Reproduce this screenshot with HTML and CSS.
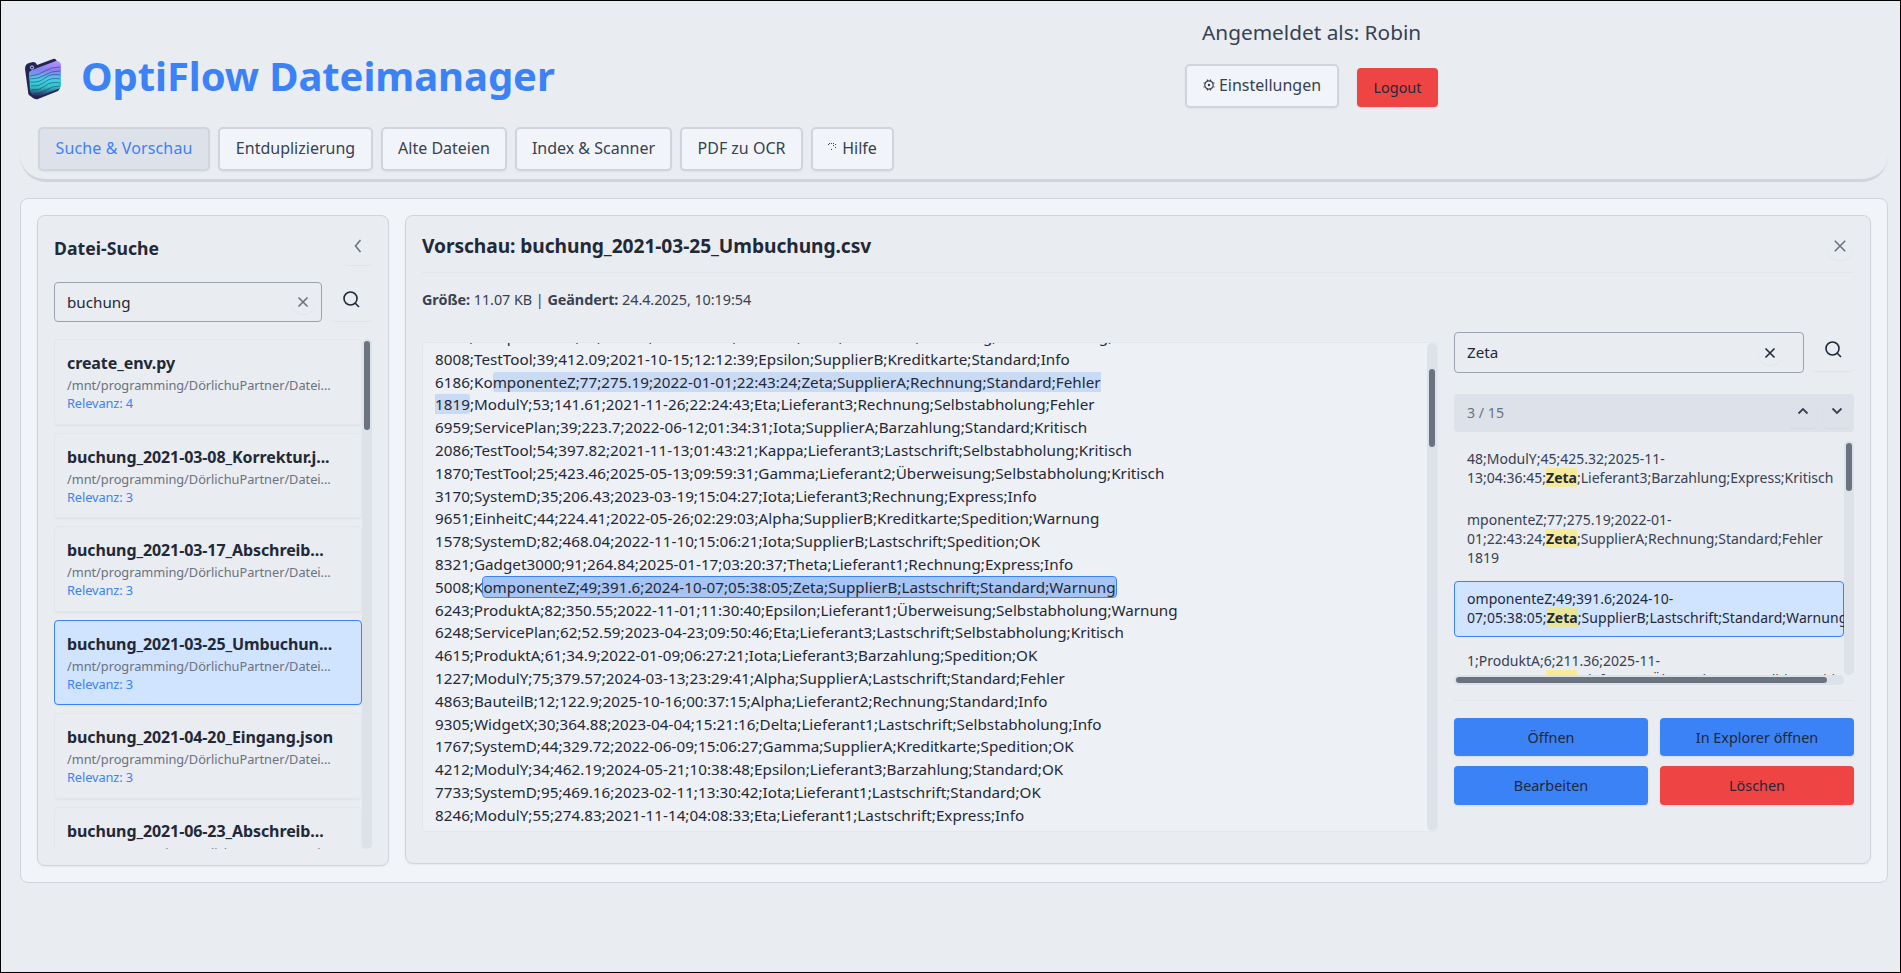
FILE: index.html
```html
<!DOCTYPE html>
<html lang="de">
<head>
<meta charset="utf-8">
<title>OptiFlow Dateimanager</title>
<link rel="stylesheet" href="styles.css">
</head>
<body>
<div class="app">
  <header class="header">
    <div class="header-top">
      <div class="brand">
        <svg class="logo" viewBox="0 0 36 42">
          <defs><linearGradient id="lg" x1="0" y1="0" x2="0" y2="1"><stop offset="0" stop-color="#b794ff"/><stop offset=".25" stop-color="#8b7cf0"/><stop offset=".5" stop-color="#45cfe6"/><stop offset=".72" stop-color="#2fc4c6"/><stop offset="1" stop-color="#2a1458"/></linearGradient></defs>
          <path d="M0 11Q0 6 4 5L8 4Q11 4 12 7L28 1Q31 0 32 4L35 9V29Q35 31 33 33L13 41Q11 42 8 40L4 37Q3 36 3 33Z" fill="#23264f"/>
          <path d="M4 15Q4 13 7 12L31 3Q36 3 36 8V27Q36 30 33 31L13 39Q6 38 5 32Z" fill="url(#lg)"/>
          <g fill="none" stroke="#24306e" stroke-width=".7" stroke-opacity=".75"><path d="M5 18Q14 17 20 13T35 9"/><path d="M5 21Q14 21 20 17T35 13"/><path d="M5 24Q14 25 20 20T35 17"/><path d="M6 28Q14 29 20 24T35 21"/><path d="M6 32Q14 33 20 28T35 25"/><path d="M8 36Q15 36 21 32T35 28"/></g>
          <circle cx="7" cy="9.5" r="1.6" fill="none" stroke="#c7d2fe" stroke-width="1"/>
        </svg>
        <h1>OptiFlow Dateimanager</h1>
      </div>
      <div class="user">
        <div class="user-name">Angemeldet als: Robin</div>
        <div class="user-actions">
          <button class="tab settings"><svg class="gear" viewBox="0 0 12 14"><circle cx="6" cy="7" r="4.2"/><circle cx="6" cy="7" r=".6"/><path d="M4.5 3V1.5M7.5 3V1.5M4.5 11V12.5M7.5 11V12.5M1.7 5H.5M10.3 5H11.5M1.7 9H.5M10.3 9H11.5"/></svg><span>Einstellungen</span></button>
          <button class="btn danger logout">Logout</button>
        </div>
      </div>
    </div>
    <nav class="tabs">
      <button class="tab active t1">Suche &amp; Vorschau</button>
      <button class="tab t2">Entduplizierung</button>
      <button class="tab t3">Alte Dateien</button>
      <button class="tab t4">Index &amp; Scanner</button>
      <button class="tab t5">PDF zu OCR</button>
      <button class="tab t6"><svg class="help" viewBox="0 0 9 8"><path d="M1 0h1v1H1zM3 0h1v1H3zM5 0h1v1H5zM0 1h1v1H0zM5 2h1v1H5zM7 1h1v1H7zM7 4h1v1H7zM3 6h1v1H3z"/></svg><span>Hilfe</span></button>
    </nav>
  </header>

  <main class="main">
    <aside class="sidebar">
      <div class="side-head">
        <h2>Datei-Suche</h2>
        <button class="ghost collapse"><svg class="ic muted" viewBox="0 0 8 14"><path d="M6.5 1L1.5 7l5 6"/></svg></button>
      </div>
      <div class="search-row">
        <div class="input"><span>buchung</span><button class="ghost round clear"><svg class="ic-x muted" viewBox="0 0 12 12"><path d="M1.5 1.5l9 9M10.5 1.5l-9 9"/></svg></button></div>
        <button class="ghost search-btn"><svg class="ic-s" viewBox="0 0 17 17"><circle cx="7.5" cy="7.5" r="6.5"/><path d="M12.3 12.3l3.7 3.7"/></svg></button>
      </div>
      <div class="file-scroll">
        <div class="file-list">
          <div class="file"><b>create_env.py</b><i>/mnt/programming/DörlichuPartner/Datei...</i><em>Relevanz: 4</em></div>
          <div class="file"><b>buchung_2021-03-08_Korrektur.j...</b><i>/mnt/programming/DörlichuPartner/Datei...</i><em>Relevanz: 3</em></div>
          <div class="file"><b>buchung_2021-03-17_Abschreib...</b><i>/mnt/programming/DörlichuPartner/Datei...</i><em>Relevanz: 3</em></div>
          <div class="file selected"><b>buchung_2021-03-25_Umbuchun...</b><i>/mnt/programming/DörlichuPartner/Datei...</i><em>Relevanz: 3</em></div>
          <div class="file"><b>buchung_2021-04-20_Eingang.json</b><i>/mnt/programming/DörlichuPartner/Datei...</i><em>Relevanz: 3</em></div>
          <div class="file"><b>buchung_2021-06-23_Abschreib...</b><i>/mnt/programming/DörlichuPartner/Datei...</i><em>Relevanz: 3</em></div>
        </div>
        <div class="track"><div class="thumb side-thumb"></div></div>
      </div>
    </aside>

    <section class="preview">
      <div class="preview-head">
        <h2>Vorschau: buchung_2021-03-25_Umbuchung.csv</h2>
        <button class="ghost round close"><svg class="ic-x muted" viewBox="0 0 12 12"><path d="M.8 .8l10.4 10.4M11.2 .8L.8 11.2"/></svg></button>
      </div>
      <div class="meta"><b>Größe:</b> 11.07 KB | <b>Geändert:</b> 24.4.2025, 10:19:54</div>
      <div class="preview-body">
        <div class="text-box">
          <pre class="csv">7421;KomponenteZ;18;301.77;2024-02-21;08:15:40;Delta;Lieferant2;Rechnung;Selbstabholung;OK
8008;TestTool;39;412.09;2021-10-15;12:12:39;Epsilon;SupplierB;Kreditkarte;Standard;Info
6186;Ko<mark>mponenteZ;77;275.19;2022-01-01;22:43:24;Zeta;SupplierA;Rechnung;Standard;Fehler
1819</mark>;ModulY;53;141.61;2021-11-26;22:24:43;Eta;Lieferant3;Rechnung;Selbstabholung;Fehler
6959;ServicePlan;39;223.7;2022-06-12;01:34:31;Iota;SupplierA;Barzahlung;Standard;Kritisch
2086;TestTool;54;397.82;2021-11-13;01:43:21;Kappa;Lieferant3;Lastschrift;Selbstabholung;Kritisch
1870;TestTool;25;423.46;2025-05-13;09:59:31;Gamma;Lieferant2;Überweisung;Selbstabholung;Kritisch
3170;SystemD;35;206.43;2023-03-19;15:04:27;Iota;Lieferant3;Rechnung;Express;Info
9651;EinheitC;44;224.41;2022-05-26;02:29:03;Alpha;SupplierB;Kreditkarte;Spedition;Warnung
1578;SystemD;82;468.04;2022-11-10;15:06:21;Iota;SupplierB;Lastschrift;Spedition;OK
8321;Gadget3000;91;264.84;2025-01-17;03:20:37;Theta;Lieferant1;Rechnung;Express;Info
5008;K<mark class="current">omponenteZ;49;391.6;2024-10-07;05:38:05;Zeta;SupplierB;Lastschrift;Standard;Warnung</mark>
<span class="tight">6243;ProduktA;82;350.55;2022-11-01;11:30:40;Epsilon;Lieferant1;Überweisung;Selbstabholung;Warnung</span>
6248;ServicePlan;62;52.59;2023-04-23;09:50:46;Eta;Lieferant3;Lastschrift;Selbstabholung;Kritisch
4615;ProduktA;61;34.9;2022-01-09;06:27:21;Iota;Lieferant3;Barzahlung;Spedition;OK
1227;ModulY;75;379.57;2024-03-13;23:29:41;Alpha;SupplierA;Lastschrift;Standard;Fehler
4863;BauteilB;12;122.9;2025-10-16;00:37:15;Alpha;Lieferant2;Rechnung;Standard;Info
9305;WidgetX;30;364.88;2023-04-04;15:21:16;Delta;Lieferant1;Lastschrift;Selbstabholung;Info
1767;SystemD;44;329.72;2022-06-09;15:06:27;Gamma;SupplierA;Kreditkarte;Spedition;OK
4212;ModulY;34;462.19;2024-05-21;10:38:48;Epsilon;Lieferant3;Barzahlung;Standard;OK
7733;SystemD;95;469.16;2023-02-11;13:30:42;Iota;Lieferant1;Lastschrift;Standard;OK
8246;ModulY;55;274.83;2021-11-14;04:08:33;Eta;Lieferant1;Lastschrift;Express;Info
5310;BauteilB;27;188.45;2023-08-19;17:22:10;Delta;Lieferant2;Überweisung;Spedition;OK</pre>
          <div class="track"><div class="thumb text-thumb"></div></div>
        </div>
        <div class="tools">
          <div class="search-row">
            <div class="input"><span>Zeta</span><button class="ghost round clear inset"><svg class="ic-x" viewBox="0 0 12 12"><path d="M1.5 1.5l9 9M10.5 1.5l-9 9"/></svg></button></div>
            <button class="ghost search-btn"><svg class="ic-s" viewBox="0 0 17 17"><circle cx="7.5" cy="7.5" r="6.5"/><path d="M12.3 12.3l3.7 3.7"/></svg></button>
          </div>
          <div class="counter">
            <span>3 / 15</span>
            <button class="ghost nav-btn"><svg class="ic-v" viewBox="0 0 12 8"><path d="M1.5 6.5L6 2l4.5 4.5"/></svg></button>
            <button class="ghost nav-btn"><svg class="ic-v" viewBox="0 0 12 8"><path d="M1.5 1.5L6 6l4.5-4.5"/></svg></button>
          </div>
          <div class="results">
            <div class="hits">
              <div class="hit">48;ModulY;45;425.32;2025-11-<br>13;04:36:45;<b>Zeta</b>;Lieferant3;Barzahlung;Express;Kritisch</div>
              <div class="hit">mponenteZ;77;275.19;2022-01-<br>01;22:43:24;<b>Zeta</b>;SupplierA;Rechnung;Standard;Fehler<br>1819</div>
              <div class="hit selected">omponenteZ;49;391.6;2024-10-<br>07;05:38:05;<b>Zeta</b>;SupplierB;Lastschrift;Standard;Warnung</div>
              <div class="hit">1;ProduktA;6;211.36;2025-11-<br>08;19:27:52;<b>Zeta</b>;Lieferant2;Überweisung;Spedition;Kritisch</div>
            </div>
            <div class="track"><div class="thumb hit-thumb"></div></div>
            <div class="htrack"><div class="hthumb"></div></div>
          </div>
          <div class="actions">
            <button class="btn">Öffnen</button>
            <button class="btn">In Explorer öffnen</button>
            <button class="btn">Bearbeiten</button>
            <button class="btn danger">Löschen</button>
          </div>
        </div>
      </div>
    </section>
  </main>
</div>
</body>
</html>
```
FILE: styles.css
```css
* { box-sizing: border-box; }
body { margin: 0; font-family: "Noto Sans", "Open Sans", sans-serif; color: #1f2937; background: #e9ecf1; }
button { font: inherit; color: inherit; margin: 0; padding: 0; border: 0; background: none; display: flex; align-items: center; justify-content: center; }
h1, h2 { margin: 0; }
svg { display: block; flex: none; }

.app { width: 1901px; height: 973px; border: 1px solid #000; padding: 0 12px 0 19px; overflow: hidden; }

.header { height: 181px; border-bottom: 3px solid #d1d5db; border-radius: 0 0 26px 26px; padding: 0 18px; }
.header-top { height: 126px; display: flex; }
.brand { display: flex; width: 1147px; padding-top: 57px; margin-left: -13px; }
.logo { width: 36px; height: 42px; margin-right: 20px; }
h1 { font-size: 40px; line-height: 36px; letter-spacing: -.08px; color: #3b82f6; white-space: nowrap; }
.user { padding-top: 16px; color: #374151; }
.user-name { font-size: 20.8px; line-height: 30px; padding-left: 30px; white-space: nowrap; }
.user-actions { display: flex; padding: 17px 0 0 13px; }
.settings { width: 154px; gap: 4px; margin-right: 18px; }
.gear { width: 12px; height: 14px; fill: none; stroke: #374151; stroke-width: 1.2; }
.logout { width: 81px; height: 39px; margin-top: 4px; color: #1f2937; }

.tabs { display: flex; gap: 8px; }
.tab { height: 44px; border: 2px solid #d1d5db; border-radius: 5px; background: #f1f5f9; color: #374151; font-size: 16px; padding-bottom: 2px; box-shadow: 0 1px 2px rgba(0,0,0,.05); white-space: nowrap; }
.tab.active { background: #dde1ea; color: #3b82f6; letter-spacing: .13px; }
.t1 { width: 172px; } .t2 { width: 155px; } .t3 { width: 126px; } .t4 { width: 157px; } .t5 { width: 123px; } .t6 { width: 83px; gap: 5px; }
.help { width: 9px; height: 8px; fill: #374151; margin-top: -3px; }

.main { margin-top: 16px; height: 685px; border: 1px solid #d1d5db; border-radius: 8px; background: #f1f5f9; padding: 16px; display: flex; align-items: flex-start; gap: 16px; }
.sidebar, .preview { border: 1px solid #d1d5db; border-radius: 8px; background: #e9ecf1; box-shadow: 0 1px 2px rgba(0,0,0,.05); }
.sidebar { width: 352px; height: 651px; padding: 16px; }
.preview { width: 1466px; height: 649px; padding: 16px; }

.side-head { display: flex; justify-content: space-between; height: 50px; }
.side-head h2 { font-size: 17.6px; line-height: 32px; letter-spacing: .05px; }
.ghost { border-radius: 4px; box-shadow: 0 1px 1px rgba(0,0,0,.04); }
.round { border-radius: 50%; }
.collapse { width: 28px; height: 33px; padding-bottom: 6px; }
.ic { width: 8px; height: 14px; }
.ic, .ic-x, .ic-s, .ic-v { fill: none; stroke: #1f2937; stroke-width: 1.6; }
svg.muted { stroke: #6b7280; }
.ic-x { width: 12px; height: 12px; }
.ic-s { width: 17px; height: 17px; margin-top: -4px; }
.ic-v { width: 12px; height: 8px; margin-top: -4px; stroke: #374151; stroke-width: 1.8; }

.search-row { display: flex; gap: 8px; }
.input { flex: 1; height: 40px; border: 1px solid #9ca3af; border-radius: 4px; display: flex; align-items: center; justify-content: space-between; padding: 0 6px 0 12px; font-size: 15.2px; }
.clear { width: 24px; height: 24px; }
.clear.inset { margin-right: 15px; }
.search-btn { width: 42px; height: 39px; }

.file-scroll { display: flex; margin-top: 17px; height: 510px; overflow: hidden; }
.file-list { width: 308px; display: flex; flex-direction: column; gap: 8px; }
.file { flex: none; height: 85.6px; border: 1px solid #e3e6ea; border-radius: 4px; padding: 13px 12px 0; box-shadow: 0 1px 2px rgba(0,0,0,.05); white-space: nowrap; }
.file b { display: block; font-size: 16px; line-height: 20px; letter-spacing: -.09px; }
.file i { display: block; font-style: normal; font-size: 12.8px; line-height: 20px; padding-top: 2px; color: #6b7280; letter-spacing: -.04px; }
.file em { display: block; font-style: normal; font-size: 12.8px; line-height: 16px; color: #3b82f6; letter-spacing: -.1px; }
.file.selected { background: #d0e3ff; border-color: #3b82f6; }

.track { width: 10px; background: #dde1e8; border-radius: 5px; flex: none; }
.thumb { width: 10px; border: 2px solid #dde1e8; border-radius: 5px; background: #6b7280; }
.side-thumb { height: 93px; }

.preview-head { display: flex; justify-content: space-between; height: 41px; border-bottom: 1px solid #e3e6ea; }
.preview-head h2 { font-size: 19.2px; line-height: 28px; letter-spacing: -.07px; white-space: nowrap; }
.close { width: 28px; height: 28px; }
.meta { font-size: 14.4px; line-height: 22px; letter-spacing: -.05px; color: #374151; padding-top: 16px; height: 59px; }
.preview-body { display: flex; gap: 16px; }
.text-box { width: 1016px; height: 490px; margin-top: 10px; border: 1px solid #e3e6ea; border-radius: 4px; background: #edf0f4; display: flex; justify-content: space-between; overflow: hidden; }
.csv { margin: -18px 0 0; padding-left: 12px; font-family: inherit; font-size: 15.2px; line-height: 22.8px; letter-spacing: .03px; }
.csv .tight { letter-spacing: 0; }
.csv mark { color: inherit; background: rgba(59,130,246,.2); border-radius: 3px; }
.csv mark.current { background: rgba(59,130,246,.4); outline: 1px solid #3b82f6; }
.text-thumb { height: 82px; margin-top: 24px; }

.tools { width: 400px; }
.tools .input { height: 41px; }
.tools .input span { margin-top: -2px; }
.counter { margin-top: 21px; height: 38px; background: #dde1ea; border-radius: 4px; display: flex; align-items: center; gap: 8px; padding: 0 4px 0 13px; font-size: 14.2px; color: #6b7280; }
.counter span { flex: 1; margin-top: -2px; }
.nav-btn { width: 26px; height: 30px; }
.results { margin-top: 9px; display: grid; grid-template: 234px 10px / 390px 10px; }
.hits { overflow: hidden; display: flex; flex-direction: column; gap: 5px; }
.hit { flex: none; border: 1px solid transparent; border-radius: 4px; padding: 7px 12px 9px; font-size: 14px; line-height: 19px; color: #374151; white-space: nowrap; overflow: hidden; }
.hit b { color: #1f2937; background: #f5eb9b; }
.hit.selected { background: #d0e3ff; border-color: #3b82f6; color: #1f2937; overflow: visible; letter-spacing: .05px; margin-top: -1px; margin-bottom: 1px; }
.hit.selected b { background: #e8e69b; }
.hit-thumb { height: 52px; }
.htrack { background: #dde1e8; border-radius: 5px; }
.hthumb { width: 375px; height: 10px; border: 2px solid #dde1e8; border-radius: 5px; background: #6b7280; }
.actions { margin-top: 15px; border-top: 1px solid #e3e6ea; padding-top: 17px; display: grid; grid-template: 38px 39px / 1fr 1fr; gap: 10px 12px; }
.btn { background: #3b82f6; border-radius: 4px; font-size: 14.4px; box-shadow: 0 1px 2px rgba(0,0,0,.08); }
.danger { background: #ef4444; }
```
